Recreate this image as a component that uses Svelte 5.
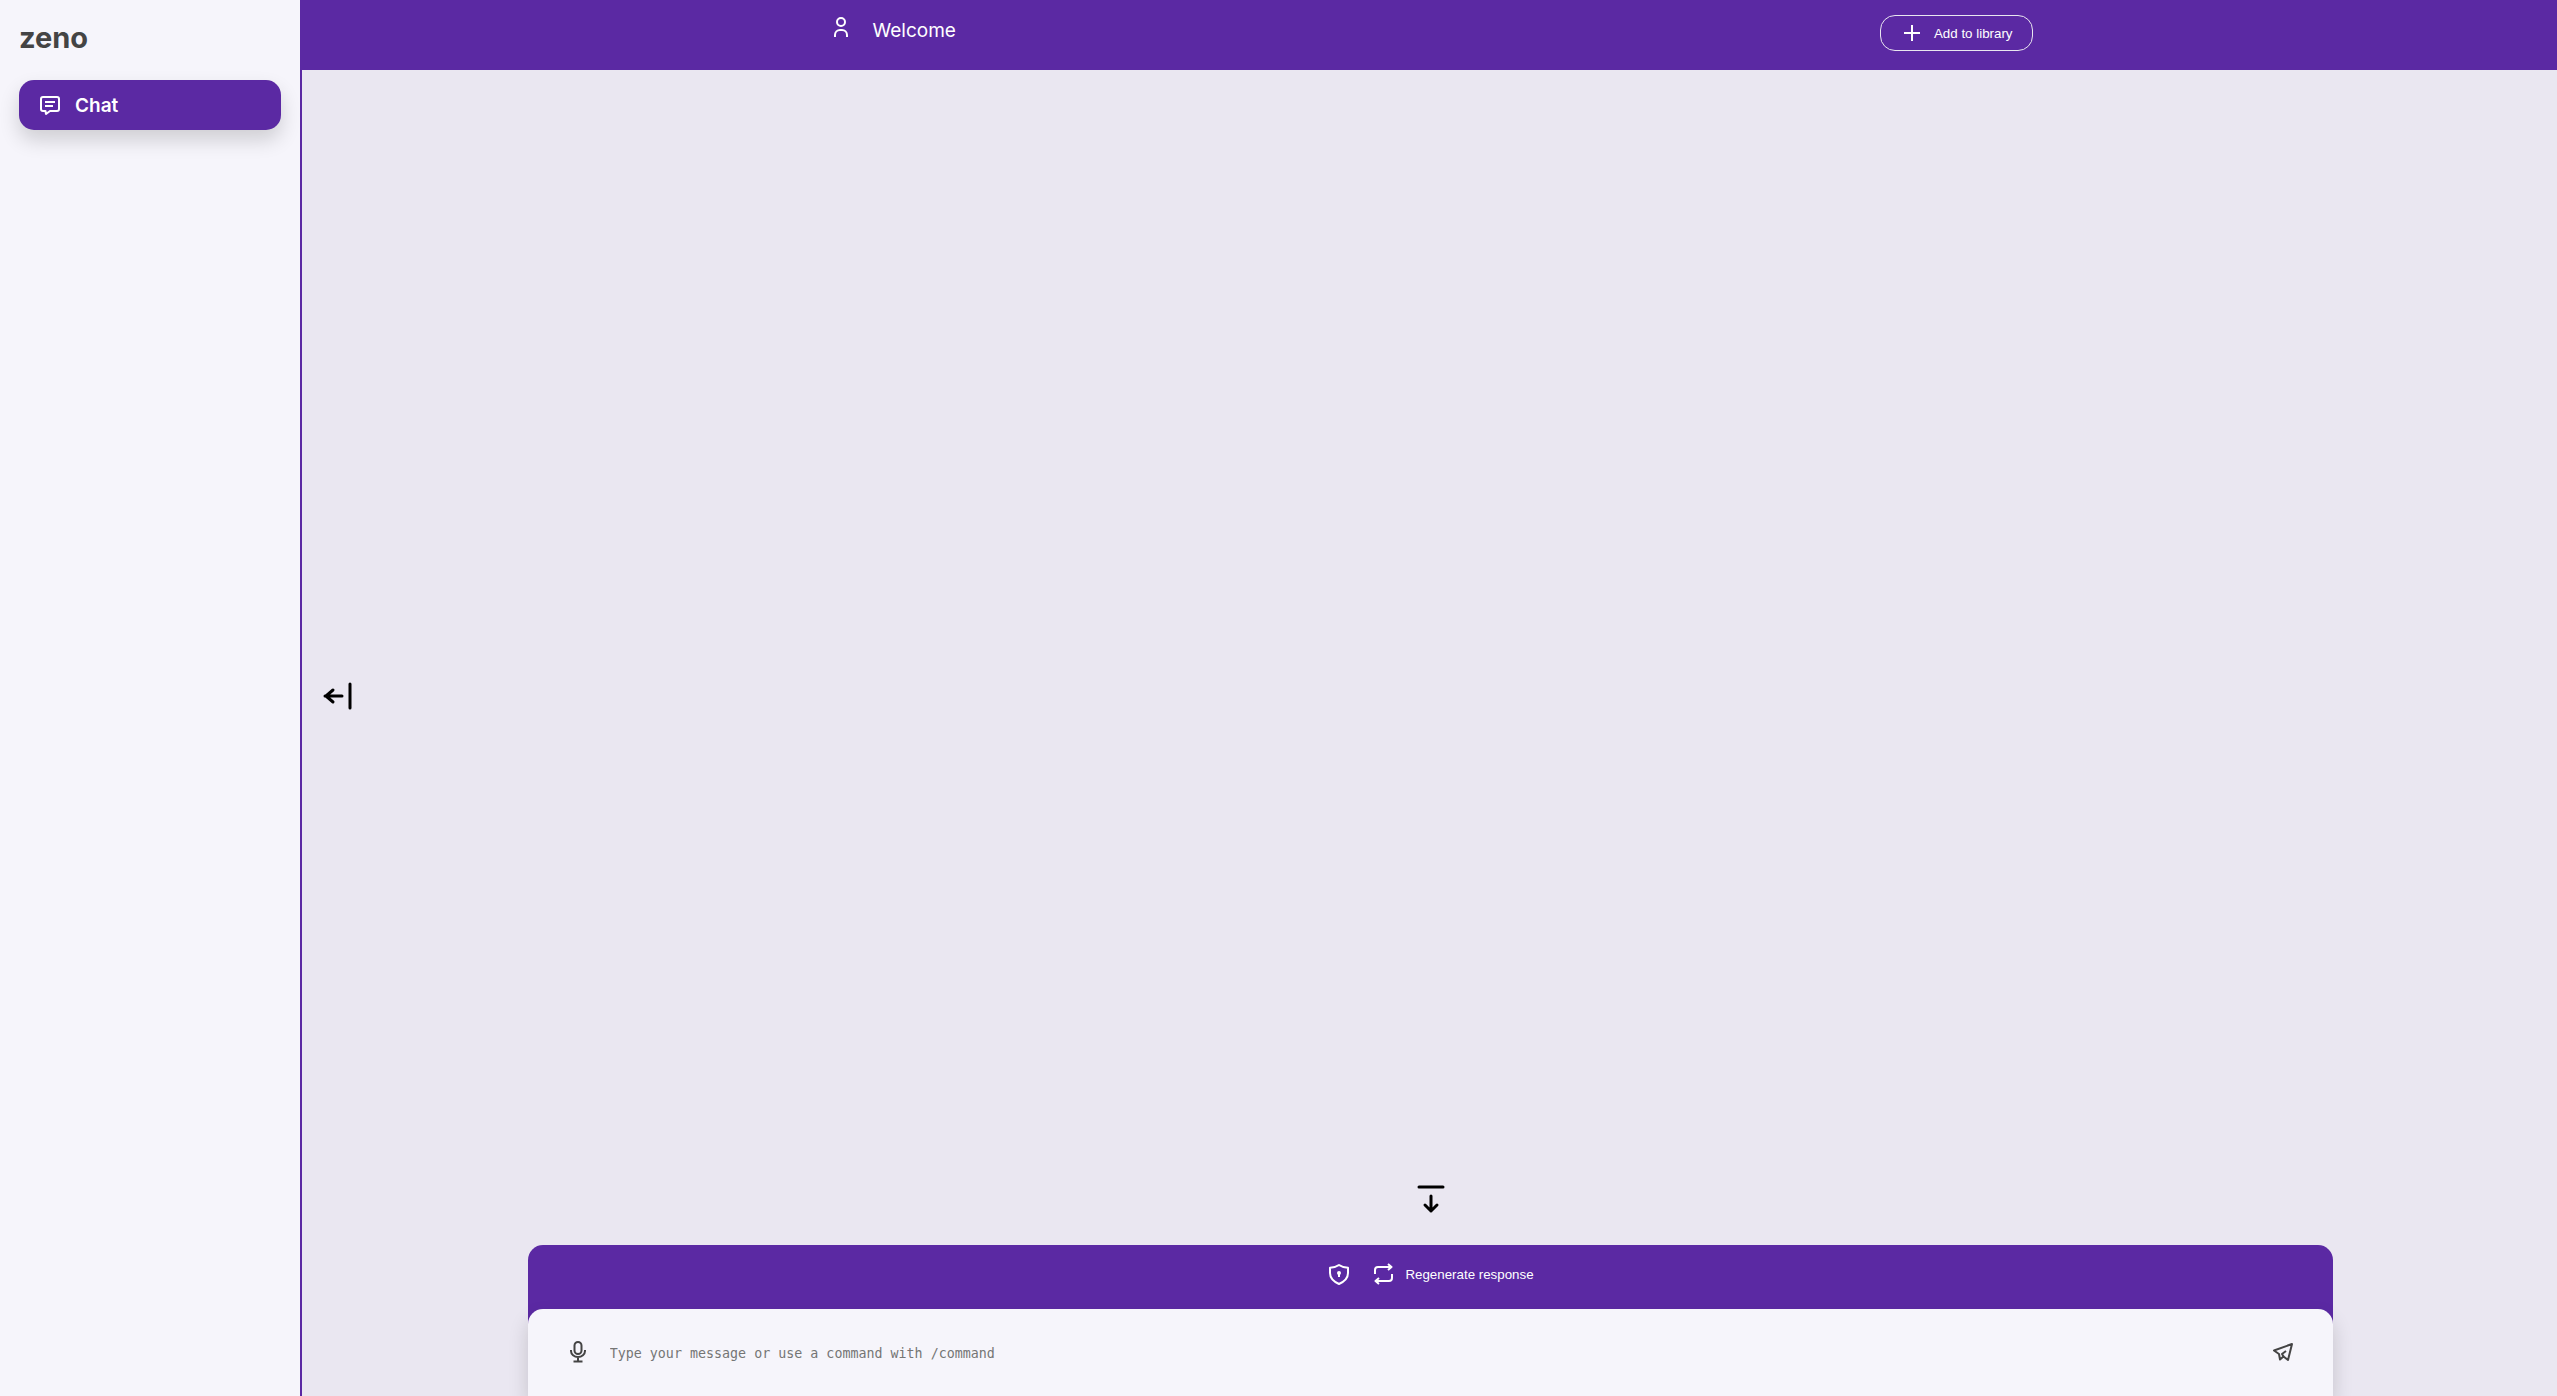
<script lang="ts">
	let message = $state('');
	let sidebarOpen = $state(true);
	let composerOpen = $state(true);

	function handleKeydown(e: KeyboardEvent) {
		if (e.key === 'Enter' && !e.shiftKey) {
			e.preventDefault();
			handleSend();
		}
	}

	function handleSend() {
		if (!message.trim()) return;
		message = '';
	}
</script>

<div class="app">
	{#if sidebarOpen}
		<aside class="sidebar">
			<h1 class="logo">zeno</h1>
			<nav>
				<a class="nav-item" href="#chat">
					<svg width="24" height="24" viewBox="0 0 24 24">
						<path d="M5 4h14a2 2 0 0 1 2 2v10a2 2 0 0 1-2 2h-7l-4 3-.5-3H5a2 2 0 0 1-2-2V6a2 2 0 0 1 2-2z" />
						<path d="M7 9h10M7 13h8" />
					</svg>
					<span>Chat</span>
				</a>
			</nav>
		</aside>
	{/if}

	<main class="main" class:wide={!sidebarOpen}>
		<header class="topbar">
			<div class="topbar-inner">
				<div class="title">
					<svg width="24" height="24" viewBox="0 0 24 24">
						<circle cx="12" cy="7" r="4" />
						<path d="M6 22v-2a5 5 0 0 1 5-5h2a5 5 0 0 1 5 5v2" />
					</svg>
					<h2>Welcome</h2>
				</div>
				<button class="library-btn">
					<svg width="24" height="24" viewBox="0 0 24 24">
						<path d="M12 4v16M4 12h16" />
					</svg>
					Add to library
				</button>
			</div>
		</header>

		<section class="conversation"></section>

		<button
			class="toggle sidebar-toggle"
			aria-label="Toggle sidebar"
			onclick={() => (sidebarOpen = !sidebarOpen)}
		>
			<svg width="36" height="36" viewBox="0 0 36 36">
				<path d="M22 18H5M13 12l-7 6 7 6M30 6v24" />
			</svg>
		</button>

		<footer class="composer">
			<button class="toggle" aria-label="Toggle message box" onclick={() => (composerOpen = !composerOpen)}>
				<svg width="36" height="36" viewBox="0 0 36 36">
					<path d="M6 6h24M18 15v15M12 24l6 6 6-6" />
				</svg>
			</button>

			{#if composerOpen}
				<div class="actions">
					<button class="action" aria-label="Privacy">
						<svg width="24" height="24" viewBox="0 0 24 24">
							<path d="M12 3c-2.500 1.800-5.500 2.600-9 2.800v5.200c0 5 3.500 8.500 9 11 5.500-2.500 9-6 9-11V5.800c-3.500-.2-6.500-1-9-2.800z" />
							<circle cx="12" cy="11" r="1" />
							<path d="M12 11v4" />
						</svg>
					</button>
					<button class="action">
						<svg width="24" height="24" viewBox="0 0 24 24">
							<path d="M4 12V8a3 3 0 0 1 3-3h13M17 2l3.500 3L17 8M21 12v4a3 3 0 0 1-3 3H5M8 16l-3.500 3L8 22" />
						</svg>
						Regenerate response
					</button>
				</div>
				<div class="message-box">
					<button class="icon-btn" aria-label="Record voice message">
						<svg width="24" height="24" viewBox="0 0 24 24">
							<rect x="8.500" y="2" width="7" height="12" rx="3.500" />
							<path d="M5 10v1a7 6 0 0 0 14 0v-1M12 17v4M7.500 21.500h9" />
						</svg>
					</button>
					<textarea
						bind:value={message}
						onkeydown={handleKeydown}
						rows="1"
						aria-label="Message"
						placeholder="Type your message or use a command with /command"
					></textarea>
					<button class="icon-btn" aria-label="Send message" onclick={handleSend}>
						<svg width="24" height="24" viewBox="0 0 24 24">
							<path d="M3 10.500L21 4l-4 16-4.500-3.500L9 19.500 8 14z" />
							<path d="M15 11l-4 3 1.500 2.500" />
						</svg>
					</button>
				</div>
			{/if}
		</footer>
	</main>
</div>

<style>
	:global(body) {
		margin: 0;
		overflow: hidden;
	}
	.app {
		display: flex;
		height: 100vh;
		overflow: hidden;
		background: #eae7f1;
		font-family: Inter, 'Liberation Sans', sans-serif;
	}
	h1,
	h2 {
		margin: 0;
	}
	svg {
		flex: none;
		fill: none;
		stroke: currentColor;
		stroke-width: 2;
		stroke-linejoin: round;
	}
	button {
		display: flex;
		align-items: center;
		padding: 0;
		border: none;
		background: transparent;
		color: inherit;
		font-family: 'Liberation Sans', Arial, sans-serif;
		cursor: pointer;
	}

	.sidebar {
		flex: none;
		box-sizing: border-box;
		width: 302px;
		padding: 19px;
		border-right: 2px solid #5b29a3;
		background: #f6f5fb;
	}
	.logo {
		margin-bottom: 23px;
		color: #444444;
		font-size: 29px;
		font-weight: 700;
		line-height: 38px;
	}
	.nav-item {
		display: flex;
		align-items: center;
		gap: 13px;
		height: 50px;
		padding: 0 19px;
		border-radius: 15px;
		background: #5b29a3;
		box-shadow: 0 10px 20px rgba(0, 0, 0, 0.16);
		color: #ffffff;
		font-size: 19px;
		font-weight: 600;
		text-decoration: none;
	}

	.main {
		position: relative;
		flex: 0 0 calc(100% - 300px);
		display: flex;
		flex-direction: column;
	}
	.main.wide {
		flex-basis: 100%;
	}
	.topbar {
		height: 70px;
		background: #5b29a3;
		color: #ffffff;
	}
	.topbar-inner {
		display: flex;
		justify-content: space-between;
		align-items: flex-start;
		max-width: 1204px;
		margin: 0 auto;
		padding-top: 15px;
	}
	.title {
		display: flex;
		gap: 20px;
	}
	.title h2 {
		padding-top: 4px;
		font-size: 19px;
		font-weight: 400;
		line-height: 24px;
	}
	.library-btn {
		gap: 10px;
		box-sizing: border-box;
		height: 36px;
		padding: 0 19px;
		border: 1px solid #e9e6f0;
		border-radius: 15px;
	}

	.conversation {
		flex: 1;
		min-height: 0;
		overflow-y: auto;
	}
	.toggle {
		color: #000000;
	}
	.toggle svg {
		stroke-width: 3;
		stroke-linecap: round;
	}
	/* floats over the conversation, halfway down the window */
	.sidebar-toggle {
		position: absolute;
		top: 50%;
		left: 18px;
		margin-top: -20px;
	}

	.composer {
		display: flex;
		flex-direction: column;
		align-items: center;
		width: 80%;
		margin: 0 auto;
	}
	.composer .toggle {
		margin-bottom: 28px;
	}
	.actions {
		display: flex;
		justify-content: center;
		align-items: flex-start;
		gap: 20px;
		box-sizing: border-box;
		width: 100%;
		height: 79px;
		margin-bottom: -15px;
		padding-top: 17px;
		border-radius: 15px 15px 0 0;
		background: #5b29a3;
		color: #ffffff;
	}
	.action {
		gap: 10px;
	}
	.message-box {
		display: flex;
		align-items: center;
		box-sizing: border-box;
		width: 100%;
		height: 87px;
		padding: 0 38px 2px;
		border-radius: 15px 15px 0 0;
		background: #f6f5fb;
		box-shadow: 0 10px 20px rgba(0, 0, 0, 0.16);
		color: #444444;
	}
	textarea {
		flex: 1;
		min-width: 0;
		height: 20px;
		margin: 4px 20px 0;
		padding: 0;
		border: none;
		outline: none;
		resize: none;
		overflow: hidden;
		background: transparent;
		color: #444444;
		font-family: 'DejaVu Sans Mono', monospace;
		line-height: 20px;
	}
	textarea::placeholder {
		color: #757575;
	}
</style>
